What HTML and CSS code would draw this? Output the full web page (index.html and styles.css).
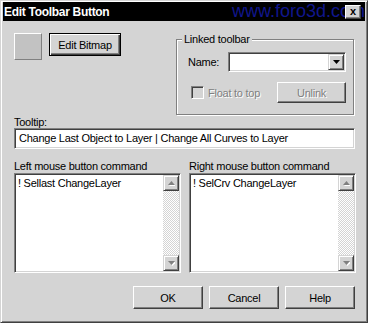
FILE: index.html
```html
<!DOCTYPE html>
<html lang="en">
<head>
    <meta charset="UTF-8">
    <title>Edit Toolbar Button</title>
    <link rel="stylesheet" href="styles.css">
</head>
<body>
<div class="window">
    <div class="titlebar">
        <span class="title">Edit Toolbar Button</span>
        <span class="watermark">www.foro3d.com</span>
        <span class="close">x</span>
    </div>
    <div class="content">
        <div class="top">
            <div class="bitmap">
                <div class="swatch"></div>
                <button class="btn default edit-bitmap">Edit Bitmap</button>
            </div>
            <fieldset class="group">
                <legend>Linked toolbar</legend>
                <div class="name-row">
                    <span class="name-label">Name:</span>
                    <div class="combo">
                        <span class="combo-field"></span>
                        <span class="combo-arrow">
                            <svg width="7" height="4" viewBox="0 0 7 4"><polygon points="0,0 7,0 3.5,4" fill="#000"/></svg>
                        </span>
                    </div>
                </div>
                <div class="float-row">
                    <span class="check disabled"><span class="box"></span>Float to top</span>
                    <button class="btn disabled unlink">Unlink</button>
                </div>
            </fieldset>
        </div>

        <div class="label tooltip-label">Tooltip:</div>
        <div class="field">Change Last Object to Layer | Change All Curves to Layer</div>

        <div class="commands">
            <div class="command">
                <div class="label">Left mouse button command</div>
                <div class="memo">
                    <div class="memo-text">! Sellast ChangeLayer</div>
                    <div class="scrollbar">
                        <span class="sb-btn"><svg width="7" height="5" viewBox="0 0 7 5"><polygon points="3.5,0 7,4 0,4" fill="#fff" transform="translate(1 1)"/><polygon points="3.5,0 7,4 0,4" fill="#808080"/></svg></span>
                        <span class="sb-track"></span>
                        <span class="sb-btn"><svg width="7" height="5" viewBox="0 0 7 5"><polygon points="0,0 7,0 3.5,4" fill="#fff" transform="translate(1 1)"/><polygon points="0,0 7,0 3.5,4" fill="#808080"/></svg></span>
                    </div>
                </div>
            </div>
            <div class="command">
                <div class="label">Right mouse button command</div>
                <div class="memo">
                    <div class="memo-text">! SelCrv ChangeLayer</div>
                    <div class="scrollbar">
                        <span class="sb-btn"><svg width="7" height="5" viewBox="0 0 7 5"><polygon points="3.5,0 7,4 0,4" fill="#fff" transform="translate(1 1)"/><polygon points="3.5,0 7,4 0,4" fill="#808080"/></svg></span>
                        <span class="sb-track"></span>
                        <span class="sb-btn"><svg width="7" height="5" viewBox="0 0 7 5"><polygon points="0,0 7,0 3.5,4" fill="#fff" transform="translate(1 1)"/><polygon points="0,0 7,0 3.5,4" fill="#808080"/></svg></span>
                    </div>
                </div>
            </div>
        </div>

        <div class="actions">
            <button class="btn">OK</button>
            <button class="btn">Cancel</button>
            <button class="btn">Help</button>
        </div>
    </div>
</div>
</body>
</html>
```

FILE: styles.css
```css
body {
    margin: 0;
    font-family: "Liberation Sans", Arial, sans-serif;
    font-size: 11px;
    letter-spacing: -0.25px;
    color: #000;
}
.window {
    box-sizing: border-box;
    width: 368px;
    height: 323px;
    background-color: #d4d4d4;
    border: 1px solid;
    border-color: #d4d4d4 #404040 #404040 #d4d4d4;
    box-shadow: inset 1px 1px #fff, inset -1px -1px #808080;
    padding: 1px 2px 2px 2px;
}
.titlebar {
    position: relative;
    height: 19px;
    background-color: #000;
    color: #fff;
    display: flex;
    align-items: center;
    padding-left: 1px;
    overflow: hidden;
}
.title {
    font-weight: bold;
    font-size: 12px;
    letter-spacing: -0.3px;
}
.watermark {
    position: absolute;
    left: 229px;
    top: -1px;
    font-size: 18px;
    line-height: 20px;
    letter-spacing: 0;
    color: #10168c;
}
.close {
    position: absolute;
    right: 4px;
    top: 3px;
    box-sizing: border-box;
    width: 16px;
    height: 14px;
    background-color: #d4d4d4;
    color: #000;
    font-weight: bold;
    font-size: 11px;
    line-height: 11px;
    letter-spacing: 0;
    text-align: center;
    border: 1px solid;
    border-color: #fff #404040 #404040 #fff;
    box-shadow: inset -1px -1px #808080;
}
.content {
    padding: 12px 10px 0 11px;
}
.btn {
    box-sizing: border-box;
    height: 23px;
    padding: 0;
    font-family: inherit;
    font-size: 11px;
    letter-spacing: inherit;
    color: #000;
    background-color: #d4d4d4;
    border: 1px solid;
    border-color: #fff #404040 #404040 #fff;
    box-shadow: inset -1px -1px #808080;
}
.btn.default {
    border-color: #000;
    box-shadow: inset 1px 1px #fff, inset -1px -1px #404040, inset -2px -2px #808080;
}
.disabled,
.btn.disabled {
    color: #808080;
    text-shadow: 1px 1px #fff;
}

/* top row */
.top {
    display: flex;
    justify-content: space-between;
    height: 82px;
}
.bitmap {
    display: flex;
    align-items: flex-start;
    gap: 7px;
}
.swatch {
    box-sizing: border-box;
    width: 28px;
    height: 27px;
    background-color: #c2c2c2;
    border: 1px solid;
    border-color: #fff #808080 #808080 #fff;
}
.edit-bitmap {
    width: 72px;
}
.group {
    box-sizing: border-box;
    width: 178px;
    height: 82px;
    margin: 0 1px 0 0;
    padding: 0 7px 0 11px;
    border: 1px solid #808080;
    box-shadow: 1px 1px #fff, inset 1px 1px #fff;
}
.group legend {
    padding: 0 2px;
    margin-left: -6px;
    line-height: 13px;
    background-color: #d4d4d4;
}
.name-row {
    display: flex;
    align-items: center;
    height: 20px;
    margin-top: 6px;
}
.name-label {
    width: 40px;
}
.combo {
    box-sizing: border-box;
    display: flex;
    justify-content: flex-end;
    width: 118px;
    height: 20px;
    padding: 1px;
    background-color: #fff;
    border: 1px solid;
    border-color: #808080 #fff #fff #808080;
    box-shadow: inset 1px 1px #404040, inset -1px -1px #d4d4d4;
}
.combo-field {
    flex: 1;
}
.combo-arrow {
    box-sizing: border-box;
    width: 16px;
    height: 16px;
    display: flex;
    align-items: center;
    justify-content: center;
    background-color: #d4d4d4;
    border: 1px solid;
    border-color: #d4d4d4 #404040 #404040 #d4d4d4;
    box-shadow: inset 1px 1px #fff, inset -1px -1px #808080;
}
.float-row {
    display: flex;
    justify-content: space-between;
    align-items: center;
    margin-top: 10px;
}
.check {
    display: flex;
    align-items: center;
    gap: 4px;
    margin-left: 3px;
}
.check .box {
    box-sizing: border-box;
    width: 13px;
    height: 13px;
    background-color: #d4d4d4;
    border: 1px solid;
    border-color: #808080 #fff #fff #808080;
    box-shadow: inset 1px 1px #404040, inset -1px -1px #d4d4d4;
}
.unlink {
    width: 69px;
    height: 21px;
}

/* fields */
.label {
    line-height: 13px;
}
.tooltip-label {
    margin-top: 2px;
    line-height: 11px;
}
.field {
    box-sizing: border-box;
    height: 21px;
    padding: 1px 1px 1px 4px;
    line-height: 17px;
    white-space: nowrap;
    background-color: #fff;
    border: 1px solid;
    border-color: #808080 #fff #fff #808080;
    box-shadow: inset 1px 1px #404040, inset -1px -1px #d4d4d4;
}
.commands {
    display: grid;
    grid-template-columns: 167px 167px;
    gap: 8px;
    margin-top: 11px;
}
.memo {
    box-sizing: border-box;
    display: flex;
    height: 100px;
    padding: 1px;
    background-color: #fff;
    border: 1px solid;
    border-color: #808080 #fff #fff #808080;
    box-shadow: inset 1px 1px #404040, inset -1px -1px #d4d4d4;
}
.memo-text {
    flex: 1;
    padding: 2px 0 0 2px;
    line-height: 13px;
}
.scrollbar {
    display: flex;
    flex-direction: column;
    width: 16px;
}
.sb-btn {
    box-sizing: border-box;
    width: 16px;
    height: 16px;
    display: flex;
    align-items: center;
    justify-content: center;
    background-color: #d4d4d4;
    border: 1px solid;
    border-color: #d4d4d4 #404040 #404040 #d4d4d4;
    box-shadow: inset 1px 1px #fff, inset -1px -1px #808080;
}
.sb-track {
    flex: 1;
    background: repeating-conic-gradient(#fff 0 25%, #d4d4d4 0 50%) 0 0 / 2px 2px;
}
.actions {
    display: flex;
    justify-content: flex-end;
    gap: 6px;
    margin-top: 13px;
}
.actions .btn {
    width: 70px;
}
```
